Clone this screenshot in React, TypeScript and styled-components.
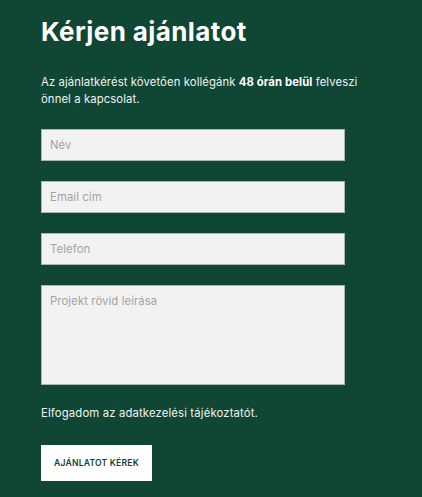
import React from "react";
import styled, { createGlobalStyle } from "styled-components";

const Global = createGlobalStyle`
  html, body { margin: 0; padding: 0; background: #0f4634; }
  body { font-family: "Inter", "Open Sans", sans-serif; }
  * { box-sizing: border-box; }
`;

const Section = styled.section`
  width: 422px;
  height: 497px;
  background: #0f4634;
  padding: 15px 41px 0 41px;
  display: flex;
  flex-direction: column;
  color: #ffffff;
`;

const Title = styled.h2`
  margin: 0;
  font-size: 26px;
  line-height: 34px;
  font-weight: 700;
  letter-spacing: 0.4px;
`;

const Lead = styled.p`
  margin: 25px 0 0 0;
  font-size: 11.3px;
  line-height: 17px;
  letter-spacing: 0.1px;
  max-width: 330px;
  color: #f2f2f2;
  b { font-weight: 700; color: #fff; }
`;

const Form = styled.form`
  margin-top: 21px;
  display: flex;
  flex-direction: column;
  gap: 20px;
  width: 304px;
`;

const fieldStyles = `
  width: 100%;
  background: #f2f2f2;
  border: 1px solid #a9b5ae;
  border-radius: 0;
  padding: 0 8px;
  font-family: "Inter", "Open Sans", sans-serif;
  font-size: 11.3px;
  letter-spacing: 0.1px;
  color: #333;
  outline: none;
  &::placeholder { color: #a3a3a3; }
`;

const Input = styled.input`
  ${fieldStyles}
  height: 32px;
`;

const TextArea = styled.textarea`
  ${fieldStyles}
  height: 100px;
  padding-top: 8px;
  resize: none;
  display: block;
`;

const Consent = styled.p`
  margin: 21px 0 0 0;
  font-size: 11.3px;
  line-height: 14px;
  letter-spacing: 0.15px;
  color: #f2f2f2;
`;

const Submit = styled.button`
  margin-top: 25px;
  width: 111px;
  height: 36px;
  background: #ffffff;
  border: none;
  color: #0f4634;
  font-family: "Inter", "Open Sans", sans-serif;
  font-size: 8.6px;
  font-weight: 600;
  letter-spacing: 0.2px;
  text-transform: uppercase;
  cursor: pointer;
`;

export default function App() {
  return (
    <>
      <Global />
      <Section>
        <Title>Kérjen ajánlatot</Title>
        <Lead>
          Az ajánlatkérést követően kollégánk <b>48 órán belül</b> felveszi
          önnel a kapcsolat.
        </Lead>
        <Form onSubmit={(e) => e.preventDefault()}>
          <Input placeholder="Név" />
          <Input placeholder="Email cím" />
          <Input placeholder="Telefon" />
          <TextArea placeholder="Projekt rövid leírása" />
        </Form>
        <Consent>Elfogadom az adatkezelési tájékoztatót.</Consent>
        <div>
          <Submit type="button">Ajánlatot kérek</Submit>
        </div>
      </Section>
    </>
  );
}
